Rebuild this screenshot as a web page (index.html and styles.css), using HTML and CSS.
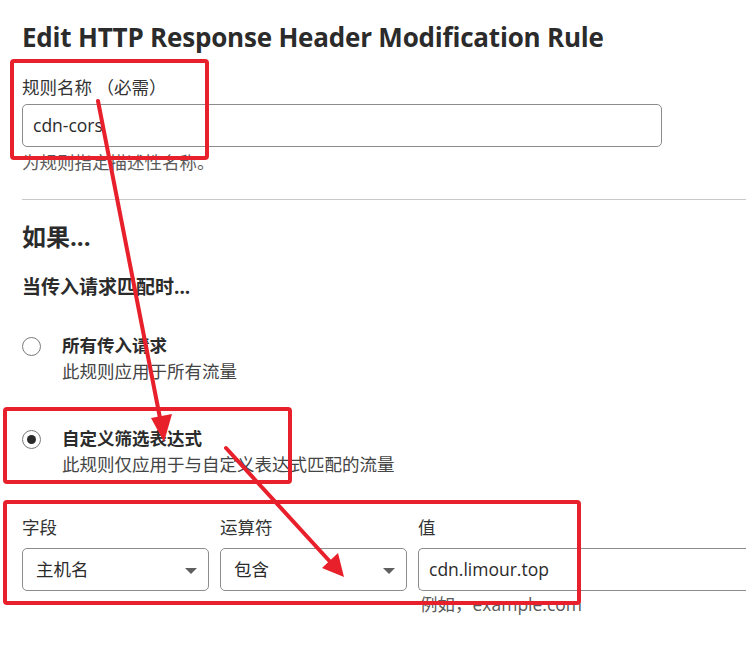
FILE: index.html
```html
<!DOCTYPE html>
<html lang="zh-CN">
<head>
<meta charset="utf-8">
<link rel="stylesheet" href="styles.css">
</head>
<body>
<main class="page">
  <h1 class="title">Edit HTTP Response Header Modification Rule</h1>

  <section class="field">
    <label class="label">规则名称 （必需）</label>
    <div class="input name-input">cdn-cors</div>
    <div class="help">为规则指定描述性名称。</div>
  </section>

  <hr class="divider">

  <h2 class="h2">如果...</h2>
  <h3 class="h3">当传入请求匹配时...</h3>

  <div class="radios">
    <div class="radio-row">
      <span class="radio"></span>
      <div class="radio-text">
        <div class="radio-title">所有传入请求</div>
        <div class="radio-desc">此规则应用于所有流量</div>
      </div>
    </div>
    <div class="radio-row">
      <span class="radio checked"></span>
      <div class="radio-text">
        <div class="radio-title">自定义筛选表达式</div>
        <div class="radio-desc">此规则仅应用于与自定义表达式匹配的流量</div>
      </div>
    </div>
  </div>

  <div class="expr">
    <div class="col">
      <div class="label">字段</div>
      <div class="input select">主机名<span class="caret"></span></div>
    </div>
    <div class="col">
      <div class="label">运算符</div>
      <div class="input select">包含<span class="caret"></span></div>
    </div>
    <div class="col">
      <div class="label">值</div>
      <div class="input value-input">cdn.limour.top</div>
      <div class="help ex">例如，example.com</div>
    </div>
  </div>
</main>

<svg class="annot" width="746" height="654" viewBox="0 0 746 654">
  <g fill="none" stroke="#e8202b" stroke-width="4">
    <rect x="12" y="61" width="195" height="97" rx="2"/>
    <rect x="5" y="409" width="285" height="73" rx="2"/>
    <rect x="5" y="502" width="574" height="101" rx="2"/>
  </g>
  <g stroke="#e8202b" stroke-width="4" stroke-linecap="round">
    <line x1="98" y1="101" x2="160" y2="418"/>
    <line x1="226" y1="448" x2="334" y2="566"/>
  </g>
  <g fill="#e8202b">
    <polygon points="151,418 172,414 164,442"/>
    <polygon points="322,568 338,553 344,577"/>
  </g>
</svg>
</body>
</html>
```

FILE: styles.css
```css
html, body {
  margin: 0;
  padding: 0;
  background: #ffffff;
  overflow: hidden;
}

body {
  width: 746px;
  height: 654px;
  position: relative;
  font-family: "Open Sans", "Noto Sans CJK SC", sans-serif;
  color: #333333;
}

.page {
  box-sizing: border-box;
  width: 746px;
  padding: 21px 0 0 22px;
}

.title {
  margin: 0;
  font-size: 26px;
  line-height: 32px;
  font-weight: 700;
  color: #2b2b2b;
  letter-spacing: -0.2px;
}

.field {
  margin-top: 23px;
  width: 640px;
}

.label {
  font-size: 17.5px;
  line-height: 22px;
  color: #333333;
}

.input {
  box-sizing: border-box;
  height: 43px;
  border: 1px solid #8c8c8c;
  border-radius: 5px;
  font-size: 17.5px;
  line-height: 41px;
  padding: 0 10px;
  color: #2b2b2b;
  background: #fff;
}

.name-input {
  margin-top: 5px;
}

.help {
  font-size: 17.5px;
  line-height: 22px;
  color: #5a5a5a;
  margin-top: 4px;
}

.divider {
  margin: 26px 0 0 0;
  border: 0;
  border-top: 1px solid #c8c8c8;
  height: 0;
}

.h2 {
  margin: 22px 0 0 0;
  font-size: 24px;
  line-height: 30px;
  font-weight: 700;
  color: #2b2b2b;
}

.h3 {
  margin: 23px 0 0 0;
  font-size: 19px;
  line-height: 24px;
  font-weight: 700;
  color: #2b2b2b;
}

.radios {
  margin-top: 35px;
  display: flex;
  flex-direction: column;
  gap: 45px;
}

.radio-row {
  display: flex;
  align-items: flex-start;
  gap: 21px;
}

.radio {
  box-sizing: border-box;
  width: 19px;
  height: 19px;
  border: 1px solid #7a7a7a;
  border-radius: 50%;
  margin-top: 3px;
  display: flex;
  align-items: center;
  justify-content: center;
  flex: none;
}

.radio.checked::after {
  content: "";
  width: 9px;
  height: 9px;
  border-radius: 50%;
  background: #2b2b2b;
}

.radio-title {
  font-size: 17.5px;
  line-height: 22px;
  font-weight: 700;
  color: #2b2b2b;
}

.radio-desc {
  font-size: 17.5px;
  line-height: 22px;
  color: #444444;
  margin-top: 4px;
}

.expr {
  margin-top: 41px;
  display: grid;
  grid-template-columns: 187px 187px 1fr;
  column-gap: 11px;
}

.col .input {
  margin-top: 10px;
}

.select {
  position: relative;
  padding-left: 13px;
}

.caret {
  position: absolute;
  right: 11px;
  top: 19px;
  width: 0;
  height: 0;
  border-left: 6px solid transparent;
  border-right: 6px solid transparent;
  border-top: 6px solid #5f5f5f;
}

.value-input {
  padding-left: 10px;
  border-right: 0;
  border-top-right-radius: 0;
  border-bottom-right-radius: 0;
}

.help.ex {
  margin-top: 2px;
  padding-left: 2px;
}

.annot {
  position: absolute;
  left: 0;
  top: 0;
  pointer-events: none;
}
```
